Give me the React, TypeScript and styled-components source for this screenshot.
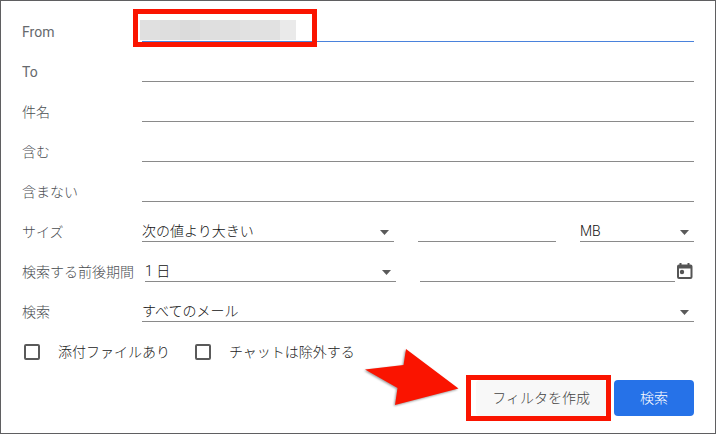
import React from 'react';
import styled, { createGlobalStyle } from 'styled-components';

const GlobalStyle = createGlobalStyle`
  * {
    box-sizing: border-box;
  }
  body {
    margin: 0;
    background: #fff;
  }
  body, input, select, button {
    font-family: Roboto, "Noto Sans CJK JP", sans-serif;
    font-size: 14px;
    font-weight: 300;
  }
`;

const Panel = styled.form`
  min-height: 100vh;
  padding: 11px 21px 17px;
  border: 1px solid #5f5f61;
  background: #fff;
`;

const Row = styled.div`
  display: grid;
  grid-template-columns: 120px minmax(0, 1fr);
  align-items: center;
  height: 40px;
`;

const Label = styled.label<{ $latin?: boolean }>`
  color: ${(p) => (p.$latin ? '#66696d' : '#4a4d51')};
  font-weight: ${(p) => (p.$latin ? 400 : 300)};
  line-height: 20px;
  white-space: nowrap;
`;

const SizeFields = styled.div`
  display: grid;
  grid-template-columns: 252fr 138fr 114fr;
  gap: 24px;
`;

const PeriodFields = styled.div`
  display: grid;
  grid-template-columns: 251fr 274fr;
  gap: 24px;
  padding-left: 3px;
`;

const DateField = styled.div`
  display: flex;
  align-items: flex-start;
  gap: 1px;
`;

const TextInput = styled.input<{ $active?: boolean }>`
  display: block;
  width: 100%;
  min-width: 0;
  height: 20px;
  padding: 0;
  border: 0;
  border-bottom: 1px solid ${(p) => (p.$active ? '#4a82dc' : '#8a8a8a')};
  border-radius: 0;
  outline: 0;
  background: transparent;
  color: #222;
`;

const SelectWrap = styled.div`
  position: relative;
  min-width: 0;
`;

const Select = styled.select`
  display: block;
  width: 100%;
  height: 20px;
  padding: 0 20px 0 0;
  border: 0;
  border-bottom: 1px solid #8a8a8a;
  border-radius: 0;
  outline: 0;
  appearance: none;
  background: transparent;
  color: #111;
  line-height: 19px;
`;

const Caret = styled.svg`
  position: absolute;
  top: 8px;
  right: 5px;
  width: 9px;
  height: 5px;
  fill: #5a5a5a;
  pointer-events: none;
`;

const IconButton = styled.button`
  flex: none;
  width: 18px;
  height: 18px;
  padding: 0;
  border: 0;
  background: none;

  svg {
    display: block;
  }
`;

const Anchor = styled.div`
  position: relative;
`;

const Redaction = styled.div`
  position: absolute;
  top: -2px;
  left: -2px;
  width: 156px;
  height: 20px;
  background: linear-gradient(
    90deg,
    #e0e0e0 0 20px,
    #dedede 20px 40px,
    #dbdbdb 40px 60px,
    #dfdfdf 60px 100px,
    #e1e1e1 100px 140px,
    #eaeaea 140px
  );
`;

const FieldHighlight = styled.div`
  position: absolute;
  top: -13px;
  left: -9px;
  width: 184px;
  height: 38px;
  border: 5px solid #fa1400;
  pointer-events: none;
`;

const Options = styled.div`
  display: flex;
  align-items: center;
  gap: 23px;
  height: 40px;
`;

const Option = styled.label`
  display: flex;
  align-items: center;
  gap: 16px;
  padding-left: 2px;
  color: #222;
  line-height: 20px;
  white-space: nowrap;
`;

const Checkbox = styled.input`
  flex: none;
  width: 16px;
  height: 16px;
  margin: 0 2px 0 0;
  border: 2px solid #5a5a5a;
  border-radius: 2px;
  appearance: none;
  background: #fff;

  &:checked {
    background: #5a5a5a;
  }
`;

const Actions = styled.div`
  display: flex;
  justify-content: flex-end;
  gap: 8px;
  margin-top: 8px;
`;

const Button = styled.button<{ $primary?: boolean }>`
  display: block;
  height: 36px;
  padding: 0 ${(p) => (p.$primary ? 26 : 16)}px;
  border: 0;
  border-radius: 4px;
  background: ${(p) => (p.$primary ? '#2672e8' : '#f8f8f8')};
  color: ${(p) => (p.$primary ? '#fff' : '#444')};
  line-height: 20px;
  white-space: nowrap;
`;

const ButtonHighlight = styled.div`
  position: absolute;
  top: -5px;
  right: -5px;
  width: 145px;
  height: 46px;
  border: 5px solid #fa1400;
  pointer-events: none;
`;

const Pointer = styled.svg`
  position: absolute;
  top: -36px;
  right: 146px;
  width: 100px;
  height: 66px;
  filter: drop-shadow(-1px 1px 1px rgba(0, 0, 0, 0.4));
  pointer-events: none;
`;

function Dropdown({ id, label, options }: { id: string; label?: string; options: string[] }) {
  return (
    <SelectWrap>
      <Select id={id} aria-label={label}>
        {options.map((o) => (
          <option key={o}>{o}</option>
        ))}
      </Select>
      <Caret viewBox="0 0 9 5" aria-hidden="true">
        <path d="M0 0h9L4.500 5z" />
      </Caret>
    </SelectWrap>
  );
}

const textFields = [
  { id: 'to', label: 'To', latin: true },
  { id: 'subject', label: '件名' },
  { id: 'has', label: '含む' },
  { id: 'without', label: '含まない' },
];

export default function App() {
  return (
    <>
      <GlobalStyle />
      <Panel onSubmit={(e) => e.preventDefault()}>
        <Row>
          <Label htmlFor="from" $latin>
            From
          </Label>
          <Anchor>
            <TextInput id="from" type="text" $active />
            <Redaction />
            <FieldHighlight />
          </Anchor>
        </Row>
        {textFields.map((f) => (
          <Row key={f.id}>
            <Label htmlFor={f.id} $latin={f.latin}>
              {f.label}
            </Label>
            <TextInput id={f.id} type="text" />
          </Row>
        ))}
        <Row>
          <Label htmlFor="size-op">サイズ</Label>
          <SizeFields>
            <Dropdown id="size-op" options={['次の値より大きい']} />
            <TextInput type="text" aria-label="サイズ" />
            <Dropdown id="size-unit" label="MB" options={['MB']} />
          </SizeFields>
        </Row>
        <Row>
          <Label htmlFor="period">検索する前後期間</Label>
          <PeriodFields>
            <Dropdown id="period" options={['1 日']} />
            <DateField>
              <TextInput type="text" aria-label="検索する前後期間" />
              <IconButton type="button" aria-label="検索する前後期間">
                <svg width="18" height="18" viewBox="0 0 18 18" aria-hidden="true">
                  <path
                    fill="#555"
                    fillRule="evenodd"
                    d="M3.500 1h2v1.500h6V1h2v1.500h1a2 2 0 0 1 2 2V15a2 2 0 0 1-2 2H3a2 2 0 0 1-2-2V4.500a2 2 0 0 1 2-2h.5zM3 6.500V15h11.500V6.500z"
                  />
                  <circle cx="6" cy="10" r="2.200" fill="#555" />
                </svg>
              </IconButton>
            </DateField>
          </PeriodFields>
        </Row>
        <Row>
          <Label htmlFor="scope">検索</Label>
          <Dropdown id="scope" options={['すべてのメール']} />
        </Row>
        <Options>
          <Option>
            <Checkbox type="checkbox" />
            添付ファイルあり
          </Option>
          <Option>
            <Checkbox type="checkbox" />
            チャットは除外する
          </Option>
        </Options>
        <Actions>
          <Anchor>
            <Button type="button">フィルタを作成</Button>
            <ButtonHighlight />
            <Pointer viewBox="0 0 100 66" aria-hidden="true">
              <path fill="#fa1400" d="M5 25.500 43.500 21 46 5 98.500 44.500 35 61 37.500 44z" />
            </Pointer>
          </Anchor>
          <Button type="submit" $primary>
            検索
          </Button>
        </Actions>
      </Panel>
    </>
  );
}
